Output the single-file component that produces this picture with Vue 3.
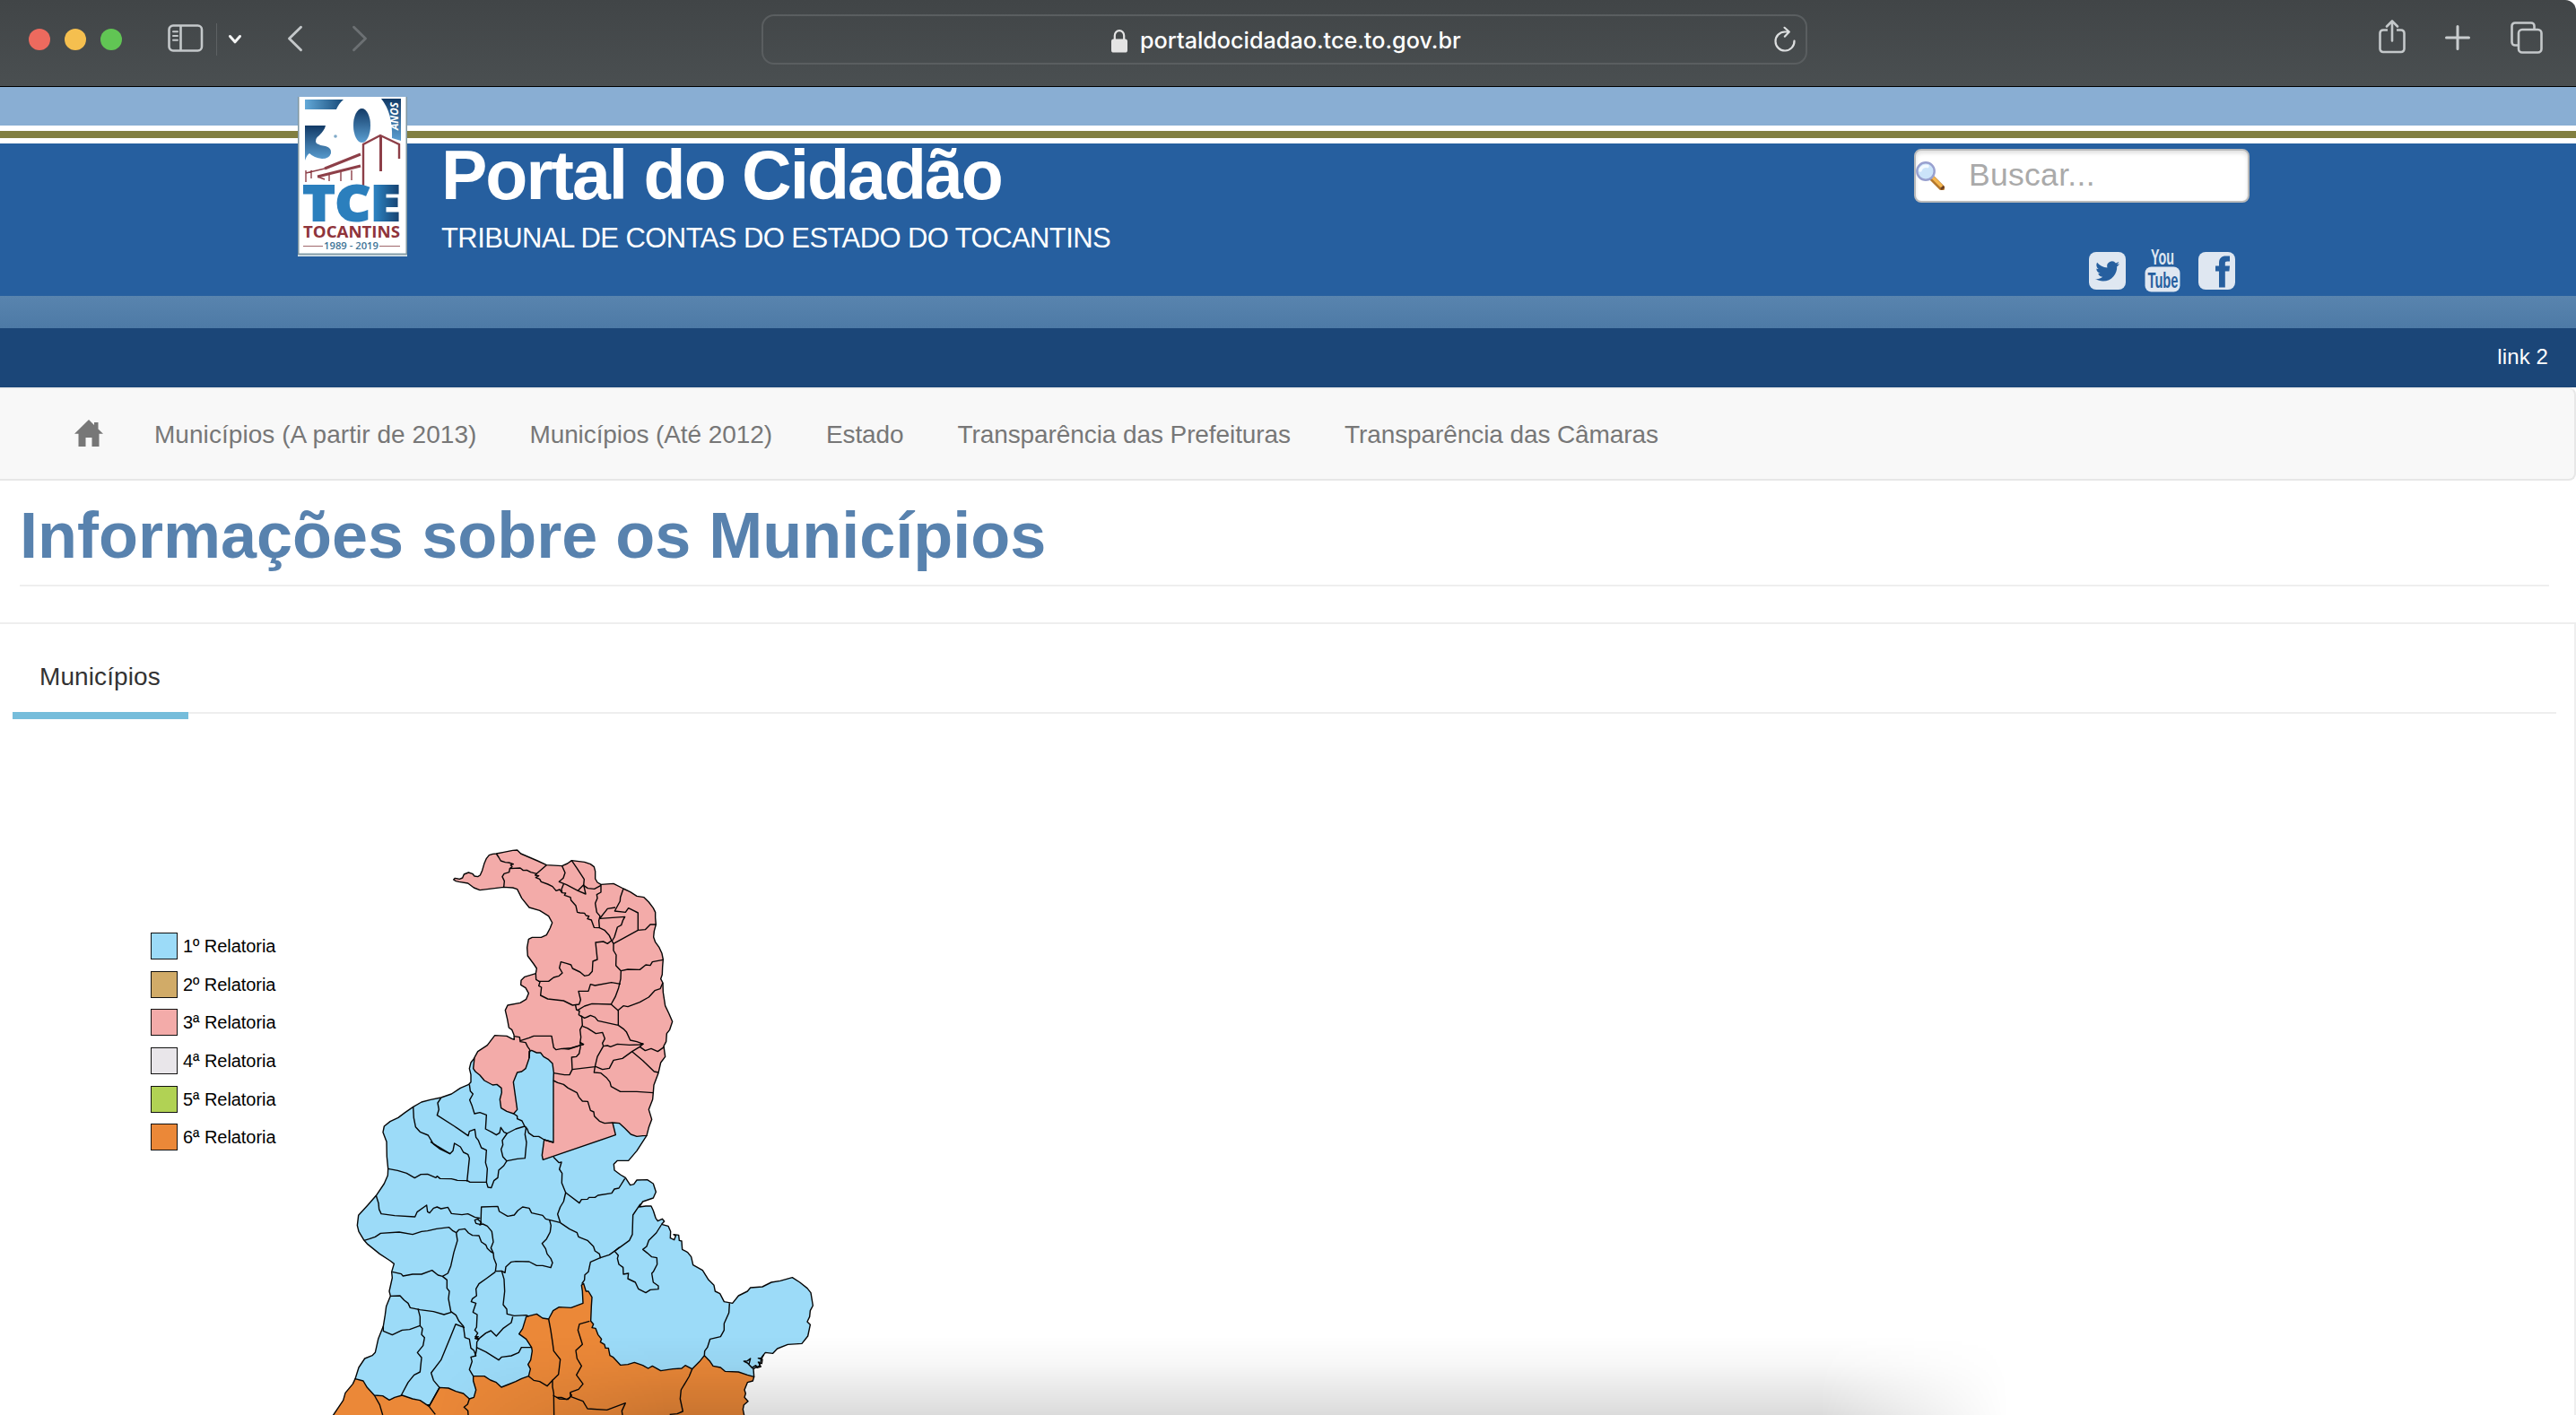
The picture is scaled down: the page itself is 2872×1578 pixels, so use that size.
<script setup>
const navItems = [
  'Municípios (A partir de 2013)',
  'Municípios (Até 2012)',
  'Estado',
  'Transparência das Prefeituras',
  'Transparência das Câmaras'
]

const legend = [
  { label: '1º Relatoria', tone: 'blue' },
  { label: '2º Relatoria', tone: 'tan' },
  { label: '3ª Relatoria', tone: 'pink' },
  { label: '4ª Relatoria', tone: 'grey' },
  { label: '5ª Relatoria', tone: 'green' },
  { label: '6ª Relatoria', tone: 'orange' }
]

// Municipality borders, grouped by the map sheet whose origin they are relative to.
const sheets = [
  {
    name: 'north',
    shift: 'translate(360 -660)',
    lines: [
      '220,66 228,78 235,90 250,95 262,96 277,101 268,104 273,110 265,116 263,128 246,133 240,143 247,158 245,178',
      '265,116 300,114 310,122 322,121 335,128 355,133 388,104',
      '355,133 350,138 362,140 352,146 365,151 370,160 392,168 408,176 420,190 432,186 440,197 452,198 448,205 468,212 470,222 486,240 491,262 500,264 515,265 520,273 530,275 525,284 538,288 547,313 565,314',
      '440,107 450,130 444,148 430,160 455,170 493,190 519,201 512,170 493,190',
      '472,89 490,115 514,152 512,172 526,182 548,184 570,172',
      '445,168 438,185 440,197',
      '570,169 570,195 556,203 558,215 551,232 556,262 567,275 563,290 565,314 582,322 598,340 605,355 612,367',
      '645,183 635,212 634,225 616,258 652,262 662,248 694,264 694,322 612,367',
      '567,282 580,265 592,250 618,246',
      '567,283 650,277 643,290 638,305 625,312 615,345 606,360',
      '694,322 718,320 735,303 754,303',
      '605,357 592,367 578,360 552,363 558,420 543,426 541,460 530,472 515,475 500,462 475,450 470,438 455,433 436,428 431,448 441,465 430,475 412,480 395,493 360,493',
      '612,367 612,390 621,405 620,440 637,458 636,485 629,515 618,545 604,570',
      '637,458 660,453 700,454 720,438 735,440 742,428 778,421',
      '352,467 353,487 366,495 362,508 371,513 368,540 392,552 445,558 475,573 497,570 502,555 495,526 528,526 535,503 550,507 605,497 636,502',
      '777,498 768,518 750,524 730,546 700,563 660,578 645,575 627,590 604,570 540,568 515,576 492,590',
      '485,573 488,588 498,592 496,605 506,612 508,640 500,655 503,680 500,700',
      '502,608 515,616 525,612 535,607 550,613 560,625 628,640 628,590',
      '508,643 525,650 553,668 575,664 583,685 575,700 578,710',
      '628,640 645,652 655,662 668,690 690,695 712,703'
    ]
  },
  {
    name: 'centre',
    shift: 'translate(360 0)',
    lines: [
      '280,17 298,20 300,35 318,38 325,52 332,62 330,90',
      '300,32 330,22 345,16 405,16 412,55 420,62 440,58 462,60 512,44 500,37 502,50',
      '444,58 470,56 512,44',
      '502,50 497,75 488,85 472,87 474,128 465,146 448,146 412,140',
      '474,128 550,119 558,85 578,50',
      '578,50 592,48 602,52 625,43 665,46 700,45 712,42',
      '550,119 547,138 570,140 588,155 600,170 604,185 635,202 690,202 745,206',
      '552,118 575,128 598,124 612,97 642,91 674,68 700,52 712,42',
      '700,52 718,65 738,58 760,68 782,52',
      '674,68 710,98 748,135 762,138',
      '411,165 425,172 445,178 460,190 490,206 496,220 508,234 526,235 535,265 546,270 548,284 565,301 582,308 609,306',
      '278,276 290,284 290,293 306,300 315,318 324,328 328,340 345,352 362,352 380,363 411,372',
      '315,318 285,327 256,342 246,338 235,322 231,340 220,347 205,338 184,327 187,280 165,272 147,276 139,250 131,230 142,210 133,200 130,178',
      '256,342 240,365 242,380 236,395 242,420 255,434 290,427 316,425 321,372 316,345 320,320',
      '255,434 245,450 228,465 225,490 212,500 203,524 192,522 187,505 190,460 184,440 187,398 170,390 160,365 152,355 148,328 130,335 126,350 80,318 22,281 28,262 24,240 35,223',
      '0,370 20,383 65,410 75,400 80,375 100,387 110,405 125,412 130,425 122,503',
      '411,421 430,440 438,438 431,462 440,475 439,508 452,540 445,570 434,588 425,612 434,640',
      '452,540 498,575 505,563 525,562 530,556 550,556 560,549 606,542 615,528 630,525 650,493'
    ]
  },
  {
    name: 'west',
    shift: '',
    lines: [
      '302,253 304,290 310,320 325,337 352,348 370,378 390,393 425,410',
      '218,460 250,466 280,475 307,491 328,479 350,478 378,490 382,485 392,493 430,494 450,499 483,500 492,505 547,505',
      '178,550 186,575 188,596 195,611 240,617 308,621 315,605 347,582 350,604 357,608 370,592 382,588 395,594 418,589 430,610 465,614 485,611 508,622 524,625 508,632 512,643 528,647 530,588 585,586 590,603 618,619 640,615 652,600 668,588 690,592 698,608 735,616 745,628 793,640',
      '516,628 530,640 524,650',
      '138,700 155,695 175,688 193,676 255,672 300,680 330,670 350,668 380,661 422,656 435,668 446,674'
    ]
  },
  {
    name: 'south-west',
    shift: 'translate(0 570)',
    lines: [
      '528,76 535,75 550,82 565,100 570,135 562,155 570,172 572,190 580,210 577,233 598,232 609,238 612,218 630,202 645,200 690,201 715,214 735,214 762,221 768,205 762,190 750,175 745,158 733,140 748,125 760,102 763,80 758,62',
      '446,104 455,94 475,91 487,105 500,113 522,114 530,135 545,145 550,157 562,168 570,172',
      '446,104 450,130 438,170 428,215 418,240 400,250 385,246 365,230 330,243 300,243 268,249 262,242 232,235',
      '400,250 415,262 415,290 423,300 420,325 428,368 445,380 455,400 470,417 475,455 490,460 495,490 505,498 512,516 495,520 499,535 490,562 503,584',
      '226,316 258,315 272,330 285,340 292,355 325,362 370,368 405,378 430,370',
      '318,358 325,385 325,415 290,428 265,430 232,446 202,433 202,417',
      '325,415 333,425 330,445 340,455 335,482 316,505 330,522 325,570 305,580 285,605 262,648',
      '474,422 444,410 428,450 395,530 362,573 370,598 390,622 355,685',
      '577,235 550,255 522,275 512,292 514,315 500,325 496,335 512,340 502,370 516,378 514,420 508,430 518,440 510,453 522,460 515,470 514,495 510,516',
      '598,232 606,260 608,300 603,345 615,360 616,376 640,382 680,380 688,384',
      '520,460 545,440 562,432 580,450 602,425 630,405 635,385',
      '508,452 520,452 509,458 521,462',
      '514,488 545,503 588,530 598,520 630,516 655,505 664,488 698,488',
      '172,648 190,680 200,714',
      '355,685 376,712',
      '490,660 484,678 472,688 485,700 486,714',
      '688,584 705,598 725,602 750,617 768,598 768,620 772,640 773,714',
      '755,393 762,430 768,470 772,500 794,528 788,578 768,598',
      '770,648 790,660 820,662 832,648 826,640'
    ]
  },
  {
    name: 'south-east',
    shift: 'translate(780 570)',
    lines: [
      '13,70 45,92 70,104 75,118 105,130 125,150 130,165 145,175 148,188 178,178 215,152 245,130 255,110 257,45 282,8',
      '148,188 115,202 108,235 96,245 95,262 86,275',
      '352,78 335,105 310,130 303,150 290,160 305,172 320,185 337,188 338,210 325,235 320,240 325,270 342,282 342,293 315,295 300,305 275,292 265,270 240,258 242,240 225,243 224,220 210,210 205,190 208,180 196,166 212,152',
      '580,340 578,372 562,408 562,430 550,452 515,460 506,488 497,500 496,515',
      '112,400 78,410 73,430 88,478 66,498 70,525 85,550 68,580 90,610 75,628 48,638 48,652 90,668 105,693 170,697 232,674 220,700 222,714',
      '0,655 18,655 35,662 47,655',
      '455,560 445,585 418,630 415,660 424,702 405,710 380,712',
      '660,560 645,545 650,525 640,533 628,534 640,540 655,556 668,548 672,556 685,552 676,537 688,542 690,528 676,524 688,524 695,512'
    ]
  }
]
</script>

<template>
  <div class="screen">
    <div class="toolbar">
      <div class="lights"><i class="red"></i><i class="amber"></i><i class="lime"></i></div>
      <svg class="ic-side" width="40" height="32" viewBox="0 0 40 32" fill="none" stroke="#c4c8ca" stroke-width="2.6">
        <rect x="1.5" y="1.5" width="36.5" height="28" rx="4.5" />
        <path d="M14.5 1.5v28" />
        <path d="M6 8.3h5M6 13h5M6 17.7h5" stroke-width="2" stroke-linecap="round" />
      </svg>
      <span class="sep"></span>
      <svg class="ic-down" width="16" height="12" viewBox="0 0 16 12" fill="none" stroke="#f4f5f5" stroke-width="3" stroke-linecap="round" stroke-linejoin="round"><path d="M2.5 2.5 8 8.8l5.500-6.300" /></svg>
      <svg class="ic-back" width="18" height="30" viewBox="0 0 18 30" fill="none" stroke="#c4c8ca" stroke-width="2.9" stroke-linecap="round" stroke-linejoin="round"><path d="M15.500 2.300 2.500 15l13 12.700" /></svg>
      <svg class="ic-fwd" width="18" height="30" viewBox="0 0 18 30" fill="none" stroke="#6c7073" stroke-width="2.900" stroke-linecap="round" stroke-linejoin="round"><path d="M2.500 2.300 15.500 15l-13 12.700" /></svg>
      <div class="url">
        <svg width="18" height="26" viewBox="0 0 18 26"><rect x="0" y="10.500" width="18" height="15" rx="2.600" fill="#e4e4e4" /><path d="M3.800 11.500V6.800a5.200 5.600 0 0 1 10.400 0v4.700" fill="none" stroke="#e4e4e4" stroke-width="2.200" /></svg>
        <span class="host">portaldocidadao.tce.to.gov.br</span>
        <svg class="reload" width="26" height="30" viewBox="0 0 26 30" fill="none" stroke="#dcdedf" stroke-width="2.200" stroke-linecap="round" stroke-linejoin="round"><path d="M23.500 16.500A10.500 10.500 0 1 1 13 6.500h4.500M12.500 1.800l5.300 4.700-5 5.200" /></svg>
      </div>
      <svg class="ic-share" width="30" height="38" viewBox="0 0 30 38" fill="none" stroke="#c4c8ca" stroke-width="2.600" stroke-linecap="round" stroke-linejoin="round"><path d="M10 11.500H5a3.500 3.500 0 0 0-3.500 3.500v17.500A3.500 3.500 0 0 0 5 36h20a3.500 3.500 0 0 0 3.500-3.500V15a3.500 3.500 0 0 0-3.500-3.500h-5" stroke-linecap="butt" /><path d="M15 23.500V2M9 7.500l6-6 6 6" /></svg>
      <svg class="ic-plus" width="28" height="28" viewBox="0 0 28 28" stroke="#c9cdcf" stroke-width="3" stroke-linecap="round"><path d="M14 1.500v25M1.500 14h25" /></svg>
      <svg class="ic-tabs" width="36" height="36" viewBox="0 0 36 36" fill="none" stroke="#c4c8ca" stroke-width="2.600"><path d="M9 26.500H5A3.500 3.500 0 0 1 1.500 23V5A3.500 3.500 0 0 1 5 1.500h18A3.500 3.500 0 0 1 26.500 5v4" /><rect x="9" y="9" width="25.500" height="25.500" rx="4" /></svg>
    </div>

    <header class="banner">
      <svg class="logo" width="122" height="178" viewBox="0 0 122 178">
        <defs>
          <linearGradient id="gbar" x1="0" x2="1"><stop offset="0" stop-color="#63a9d8" /><stop offset="1" stop-color="#174a78" /></linearGradient>
          <linearGradient id="gdrop" x1="0" x2="0" y1="0" y2="1"><stop offset="0" stop-color="#123a66" /><stop offset="1" stop-color="#5b9fd2" /></linearGradient>
          <linearGradient id="gtce" x1="0" x2="1"><stop offset="0" stop-color="#2b7fbd" /><stop offset=".75" stop-color="#2b7fbd" /><stop offset="1" stop-color="#153f6c" /></linearGradient>
        </defs>
        <rect width="122" height="178" fill="#d5e3ea" />
        <path d="M.7 0V175.500H121.300V0" fill="none" stroke="#8096a0" stroke-width="1.600" />
        <rect x="1.800" width="118.400" height="174" fill="#fff" />
        <path d="M8 3h43q-5 4-8 11H8z" fill="url(#gbar)" />
        <ellipse cx="71.500" cy="32" rx="9.500" ry="19" fill="url(#gdrop)" />
        <path d="M93 2h22v47l-10-3q1-28-12-44z" fill="url(#gdrop)" />
        <path d="M8 32h23q-1 5-7 11-6 4-3 9 5 3 10 3 7 2 6 8-2 6-10 6-9-1-14-6-3 2-5 8z" fill="url(#gdrop)" />
        <circle cx="42" cy="44" r="1.800" fill="#7fa9c8" />
        <text transform="translate(112 37) rotate(-90)" font-size="13" font-weight="700" font-style="italic" fill="#fff" textLength="31" lengthAdjust="spacingAndGlyphs">ANOS</text>
        <g fill="none" stroke="#8d3f48" stroke-width="2.400"><path d="M73 99V53L92 43l21 10v16" /><path d="M92.500 43v40" stroke-width="3" /><path d="M70 64 30 80M70 77 22 89" stroke-width="3" /><path d="M30 80 9 85M9 82v13M15 82v9M35 86v8M48 84v10M60 82v11M22 89l8 3" stroke-width="1.400" /></g>
        <text x="5.500" y="138" font-size="54" font-weight="800" fill="url(#gtce)" stroke="url(#gtce)" stroke-width="1.800" textLength="109" lengthAdjust="spacingAndGlyphs">TCE</text>
        <text x="6" y="157" font-size="18.500" font-weight="700" fill="#8f343b" textLength="108" lengthAdjust="spacingAndGlyphs">TOCANTINS</text>
        <text x="29" y="170" font-size="11.500" font-weight="600" fill="#3e7396" textLength="61" lengthAdjust="spacingAndGlyphs">1989 - 2019</text>
        <path d="M6 166.500h22M91 166.500h23" stroke="#a0686c" stroke-width="1.200" />
      </svg>
      <div class="titles">
        <h1>Portal do Cidadão</h1>
        <p>TRIBUNAL DE CONTAS DO ESTADO DO TOCANTINS</p>
      </div>
      <div class="tools">
        <div class="search">
          <svg width="32" height="32" viewBox="0 0 32 32"><path d="M18.500 19 29 29.500" stroke="#b3772c" stroke-width="6.500" stroke-linecap="round" /><path d="M19.500 18.500 28 27" stroke="#f4b64e" stroke-width="3.500" stroke-linecap="round" /><path d="M28 31l3.500-3" stroke="#6b3f22" stroke-width="2.500" /><circle cx="11" cy="11" r="9.700" fill="#cbe4fa" stroke="#98a0cf" stroke-width="2.400" /><path d="M5 10a6.500 6.500 0 0 1 8-4.500" fill="none" stroke="#f3faff" stroke-width="3.500" stroke-linecap="round" /></svg>
          <span>Buscar...</span>
        </div>
        <div class="social">
          <svg width="41" height="42" viewBox="0 0 41 42"><rect width="41" height="42" rx="8" fill="#dfe7f1" /><path d="M34 13.200c-1 .5-2 .8-3.100.9 1.100-.7 2-1.700 2.400-3-1 .6-2.200 1.100-3.400 1.300a5.500 5.500 0 0 0-9.500 5C15.800 17.200 11.800 15 9.100 11.700c-1.500 2.600-.6 5.800 1.700 7.400-.9 0-1.700-.3-2.500-.7 0 2.700 1.900 5 4.400 5.500-.8.2-1.600.2-2.500.1.700 2.200 2.700 3.800 5.100 3.800-2.300 1.800-5 2.600-8.100 2.300 2.500 1.600 5.400 2.500 8.400 2.500 10.200 0 16-8.700 15.600-16.400 1.100-.8 2.100-1.800 2.800-3z" fill="#265f9f" /></svg>
          <svg class="yt" width="40" height="50" viewBox="0 0 40 50"><text x="7" y="18" font-size="23" font-weight="700" fill="#dfe7f1" textLength="26" lengthAdjust="spacingAndGlyphs">You</text><rect x=".5" y="20.500" width="39" height="28" rx="7" fill="#dfe7f1" /><text x="3.500" y="43.500" font-size="24" font-weight="700" fill="#265f9f" textLength="34" lengthAdjust="spacingAndGlyphs">Tube</text></svg>
          <svg width="41" height="42" viewBox="0 0 41 42"><rect width="41" height="42" rx="8" fill="#dfe7f1" /><path d="M23 39.500V21.500h-4v-6h4v-3.300C23 7 26 4.500 30.500 4.500H35v6h-2.800c-2 0-2.400.9-2.400 2.300v2.700H35l-.6 6h-4.600v18z" fill="#265f9f" /></svg>
        </div>
      </div>
    </header>
    <div class="linkbar"><a>link 2</a></div>

    <nav>
      <svg width="32" height="30" viewBox="0 0 32 30"><path d="M16 0 0 15.800h4.500V30h8V20h7v10h8V15.800H32l-5.500-5.400V3H22v3z" fill="#777" /></svg>
      <a v-for="item in navItems" :key="item">{{ item }}</a>
    </nav>

    <h2>Informações sobre os Municípios</h2>

    <section class="panel">
      <div class="tabs"><a>Municípios</a></div>
      <div class="chart">
        <ul>
          <li v-for="row in legend" :key="row.label"><i :class="row.tone"></i>{{ row.label }}</li>
        </ul>
        <svg class="map" width="570" height="648" viewBox="0 -660 1710 1944">
          <path class="area blue" d="M508 88 495 105 490 125 495 145 495 170 488 178 460 190 430 210 395 222 360 229 330 237 302 253 275 272 252 289 225 302 205 318 201 338 213 370 214 420 218 460 217 482 205 510 178 550 150 582 119 616 115 650 120 670 138 700 150 713 190 745 225 768 238 778 230 805 232 825 222 870 226 886 212 920 208 950 202 987 185 1030 175 1075 165 1085 140 1095 120 1125 108 1163 180 1250H1300L1360 1200 1425 1158 1442 1156 1440 1130 1450 1123 1460 1120 1468 1090 1480 1075 1505 1078 1520 1062 1555 1048 1602 1045 1622 1020 1630 982 1620 972 1628 955 1630 935 1639 918 1632 875 1620 860 1595 840 1570 824 1530 835 1500 840 1470 855 1430 858 1420 870 1390 885 1370 910 1342 905 1328 878 1312 870 1308 850 1290 832 1270 800 1238 782 1232 755 1220 740 1202 730 1200 702 1192 700 1190 682 1173 680 1180 685 1175 698 1162 692 1163 670 1155 652 1133 646 1142 636 1135 628 1120 635 1113 625 1105 600 1098 585 1080 585 1058 588 1070 570 1105 558 1114 538 1105 510 1085 497 1050 498 1040 512 1028 515 1012 490 995 480 975 465 973 445 985 433 1022 433 1050 400 1083 349 800 100 690 40 600 40Z" />
          <path class="area orange" d="M108 1163 135 1170 148 1192 172 1218 200 1220 222 1234 240 1225 265 1218 300 1230 325 1235 355 1255 390 1192 420 1194 445 1205 470 1212 490 1230 505 1225 512 1200 503 1170 503 1154 540 1154 560 1167 580 1175 597 1191 620 1182 645 1172 665 1162 688 1154 694 1130 686 1115 695 1100 700 1070 698 1058 680 1030 656 1013 668 995 680 955 715 946 735 960 755 963 770 935 790 923 830 925 870 910 868 870 865 850 872 844 880 870 888 870 900 890 898 920 896 970 905 980 900 992 912 994 920 1015 932 1030 928 1040 942 1048 945 1060 955 1060 960 1085 970 1090 995 1117 1020 1115 1042 1108 1070 1118 1088 1128 1102 1120 1130 1136 1170 1130 1200 1128 1212 1118 1235 1130 1260 1105 1276 1085 1295 1105 1305 1120 1330 1125 1345 1138 1390 1140 1420 1150 1442 1156 1438 1170 1420 1175 1410 1200 1414 1212 1410 1225 1422 1238 1408 1250 1405 1265 1412 1300H20L35 1284 68 1235 75 1210 100 1180Z" />
          <path class="area pink" transform="translate(360 -660)" d="M77 153 82 148 97 151 107 147 112 135 127 129 140 133 147 141 158 143 166 138 173 122 180 98 187 82 196 71 208 67 220 66 245 61 275 55 290 54 302 66 330 78 358 90 388 104 440 107 458 99 472 89 515 94 535 101 547 110 551 125 551 150 558 162 570 169 612 166 645 183 668 194 690 208 714 212 730 228 745 248 752 262 752 280 754 303 748 325 746 345 752 362 765 380 774 400 778 420 776 445 775 470 770 485 777 498 778 530 785 575 797 600 809 628 800 655 790 668 788 695 780 710 785 745 770 765 762 800 747 840 745 865 743 888 730 922 740 955 730 982 723 1009 710 1010 690 1012 670 1005 650 985 632 968 609 966 619 1007 376 1090 373 1075 380 1023 411 1032 411 825 412 798 408 768 395 755 378 745 368 732 355 732 338 724 330 728 330 750 318 785 305 795 290 798 277 830 290 922 278 936 255 928 236 917 232 888 238 865 237 850 222 838 208 840 180 825 165 807 150 795 143 785 147 748 158 728 190 707 215 674 255 676 272 685 280 688 279 672 272 655 262 648 257 620 250 590 258 573 300 565 320 553 328 533 318 515 302 505 303 490 315 478 352 467 355 450 345 435 325 408 323 380 328 352 340 346 370 346 388 338 400 315 407 297 395 275 365 256 330 246 305 215 290 185 275 180 245 178 165 188 145 180 125 165 95 160 85 158Z" />
          <g v-for="sheet in sheets" :key="sheet.name" class="borders" :transform="sheet.shift || null">
            <polyline v-for="(pts, i) in sheet.lines" :key="i" :points="pts" />
          </g>
        </svg>
      </div>
    </section>
    <div class="dock-shade"></div>
  </div>
</template>

<style>
body { background: #fff; overflow: hidden; }
</style>

<style scoped>
.screen { position: relative; display: flex; flex-direction: column; width: 2872px; height: 1578px; overflow: hidden; background: #fff; font-family: "Liberation Sans", Arial, sans-serif; border-radius: 0 12px 0 0; }
.toolbar { box-sizing: border-box; flex: none; display: flex; align-items: flex-start; height: 97px; border-bottom: 1px solid #000; background: linear-gradient(#414547, #4a4f51); }
.toolbar > svg, .toolbar > span, .toolbar > div { flex: none; }
.lights { display: flex; gap: 16px; margin: 32px 0 0 32px; }
.lights i { width: 24px; height: 24px; border-radius: 50%; }
.red { background: #ed6a5e; }
.amber { background: #f5bf4f; }
.lime { background: #61c554; }
.ic-side { margin: 27px 0 0 51px; }
.sep { width: 1px; height: 36px; margin: 26px 0 0 14px; background: #5d6163; }
.ic-down { margin: 38px 0 0 12px; }
.ic-back { margin: 28px 0 0 50px; }
.ic-fwd { margin: 28px 0 0 54px; }
.url { box-sizing: border-box; display: flex; align-items: flex-start; width: 1166px; height: 56px; margin: 16px 0 0 439px; border: 2px solid #5a5e60; border-radius: 14px; padding: 15px 0 0 388px; }
.host { width: 360px; margin: -3px 0 0 14px; font: 500 25.200px/30px Inter, sans-serif; color: #fff; white-space: nowrap; }
.reload { margin: -4px 0 0 346px; }
.ic-share { margin: 22px 0 0 637px; }
.ic-plus { margin: 28px 0 0 44px; }
.ic-tabs { margin: 24px 0 0 45px; }

.banner { flex: none; display: flex; align-items: flex-start; height: 269px; background: linear-gradient(#89aed3 0 43px, #fff 43px 49px, #817f41 49px 57px, #fff 57px 63px, #265f9f 63px 233px, #5984ae 233px, #4d7aa6 269px); }
.logo { flex: none; margin: 11px 0 0 332px; font-family: "Open Sans", sans-serif; }
.titles { width: 800px; margin: 58px 0 0 38px; color: #fff; white-space: nowrap; }
h1 { margin: 0; font-size: 77px; line-height: 80px; letter-spacing: -2px; }
.titles p { margin: 11px 0 0; font-size: 31px; line-height: 40px; letter-spacing: -.58px; }
.tools { display: flex; flex-direction: column; width: 374px; margin: 69px 0 0 842px; }
.search { box-sizing: border-box; display: flex; align-items: center; height: 60px; border: 2px solid #bbb; border-radius: 8px; background: #fff; box-shadow: inset 0 3px 4px rgba(0, 0, 0, .12); }
.search span { margin: -2px 0 0 27px; font-size: 35.500px; letter-spacing: .3px; color: #aaa; }
.social { display: flex; gap: 20.500px; align-items: center; margin: 51px 0 0 195px; }
.yt { overflow: visible; font-family: "Liberation Sans Narrow", "Liberation Sans", sans-serif; }
.linkbar { box-sizing: border-box; flex: none; display: flex; justify-content: flex-end; height: 66px; padding: 17px 31px 0 0; background: #1b4678; color: #fff; font-size: 24px; line-height: 30px; letter-spacing: .1px; }

nav { box-sizing: border-box; flex: none; display: flex; align-items: center; height: 104px; padding-left: 83px; border: 2px solid #e7e7e7; border-left: 0; border-radius: 0 8px 8px 0; background: #f8f8f8; border-top-color: #eee; }
nav svg { margin: -3px -3px 0 0; }
nav a { margin: 1px 0 0 60px; font-size: 28px; line-height: 40px; letter-spacing: -.09px; color: #777; white-space: nowrap; }
nav a:first-of-type { letter-spacing: .05px; margin-right: -1px; }
h2 { flex: none; margin: 0 30px 0 22px; padding: 21px 0 15px; border-bottom: 2px solid #eee; font-size: 72px; line-height: 80px; color: #5882ae; white-space: nowrap; }
.panel { flex: 1; min-height: 0; margin-top: 40px; border-top: 2px solid #eee; border-right: 2px solid #eee; }
.tabs { display: flex; height: 98px; margin: 0 20px 0 14px; border-bottom: 2px solid #eee; }
.tabs a { height: 59px; width: 166px; padding: 39px 0 0 30px; border-bottom: 8px solid #76bddb; font-size: 28px; line-height: 40px; letter-spacing: .1px; color: #333; }
.chart { display: flex; align-items: flex-start; padding-top: 134px; }
ul { display: flex; flex-direction: column; gap: 12.700px; width: 192px; margin: 110px 0 0; padding: 0 0 0 168px; list-style: none; }
li { display: flex; gap: 6px; font-size: 20px; line-height: 30px; letter-spacing: -.05px; color: #000; white-space: nowrap; }
li i { box-sizing: border-box; width: 30px; height: 30px; border: 1.500px solid #111; }
.blue { background: #9cdbf8; fill: #9cdbf8; }
.tan { background: #d1ab68; }
.pink { background: #f3aba9; fill: #f3aba9; }
.grey { background: #e9e6ea; }
.green { background: #b1d254; }
.orange { background: #eb8838; fill: #eb8838; }
.map { flex: none; }
.area, .borders polyline { stroke: #060606; stroke-width: 4.200; stroke-linejoin: round; }
.map .area { background: none; }
.borders polyline { fill: none; }
.dock-shade { position: absolute; left: 480px; top: 1490px; width: 1760px; height: 88px; background: linear-gradient(rgba(0, 0, 0, 0), rgba(0, 0, 0, .03) 35%, rgba(0, 0, 0, .14)); -webkit-mask-image: linear-gradient(90deg, transparent, #000 15%, #000 88%, transparent); mask-image: linear-gradient(90deg, transparent, #000 15%, #000 88%, transparent); }
</style>
